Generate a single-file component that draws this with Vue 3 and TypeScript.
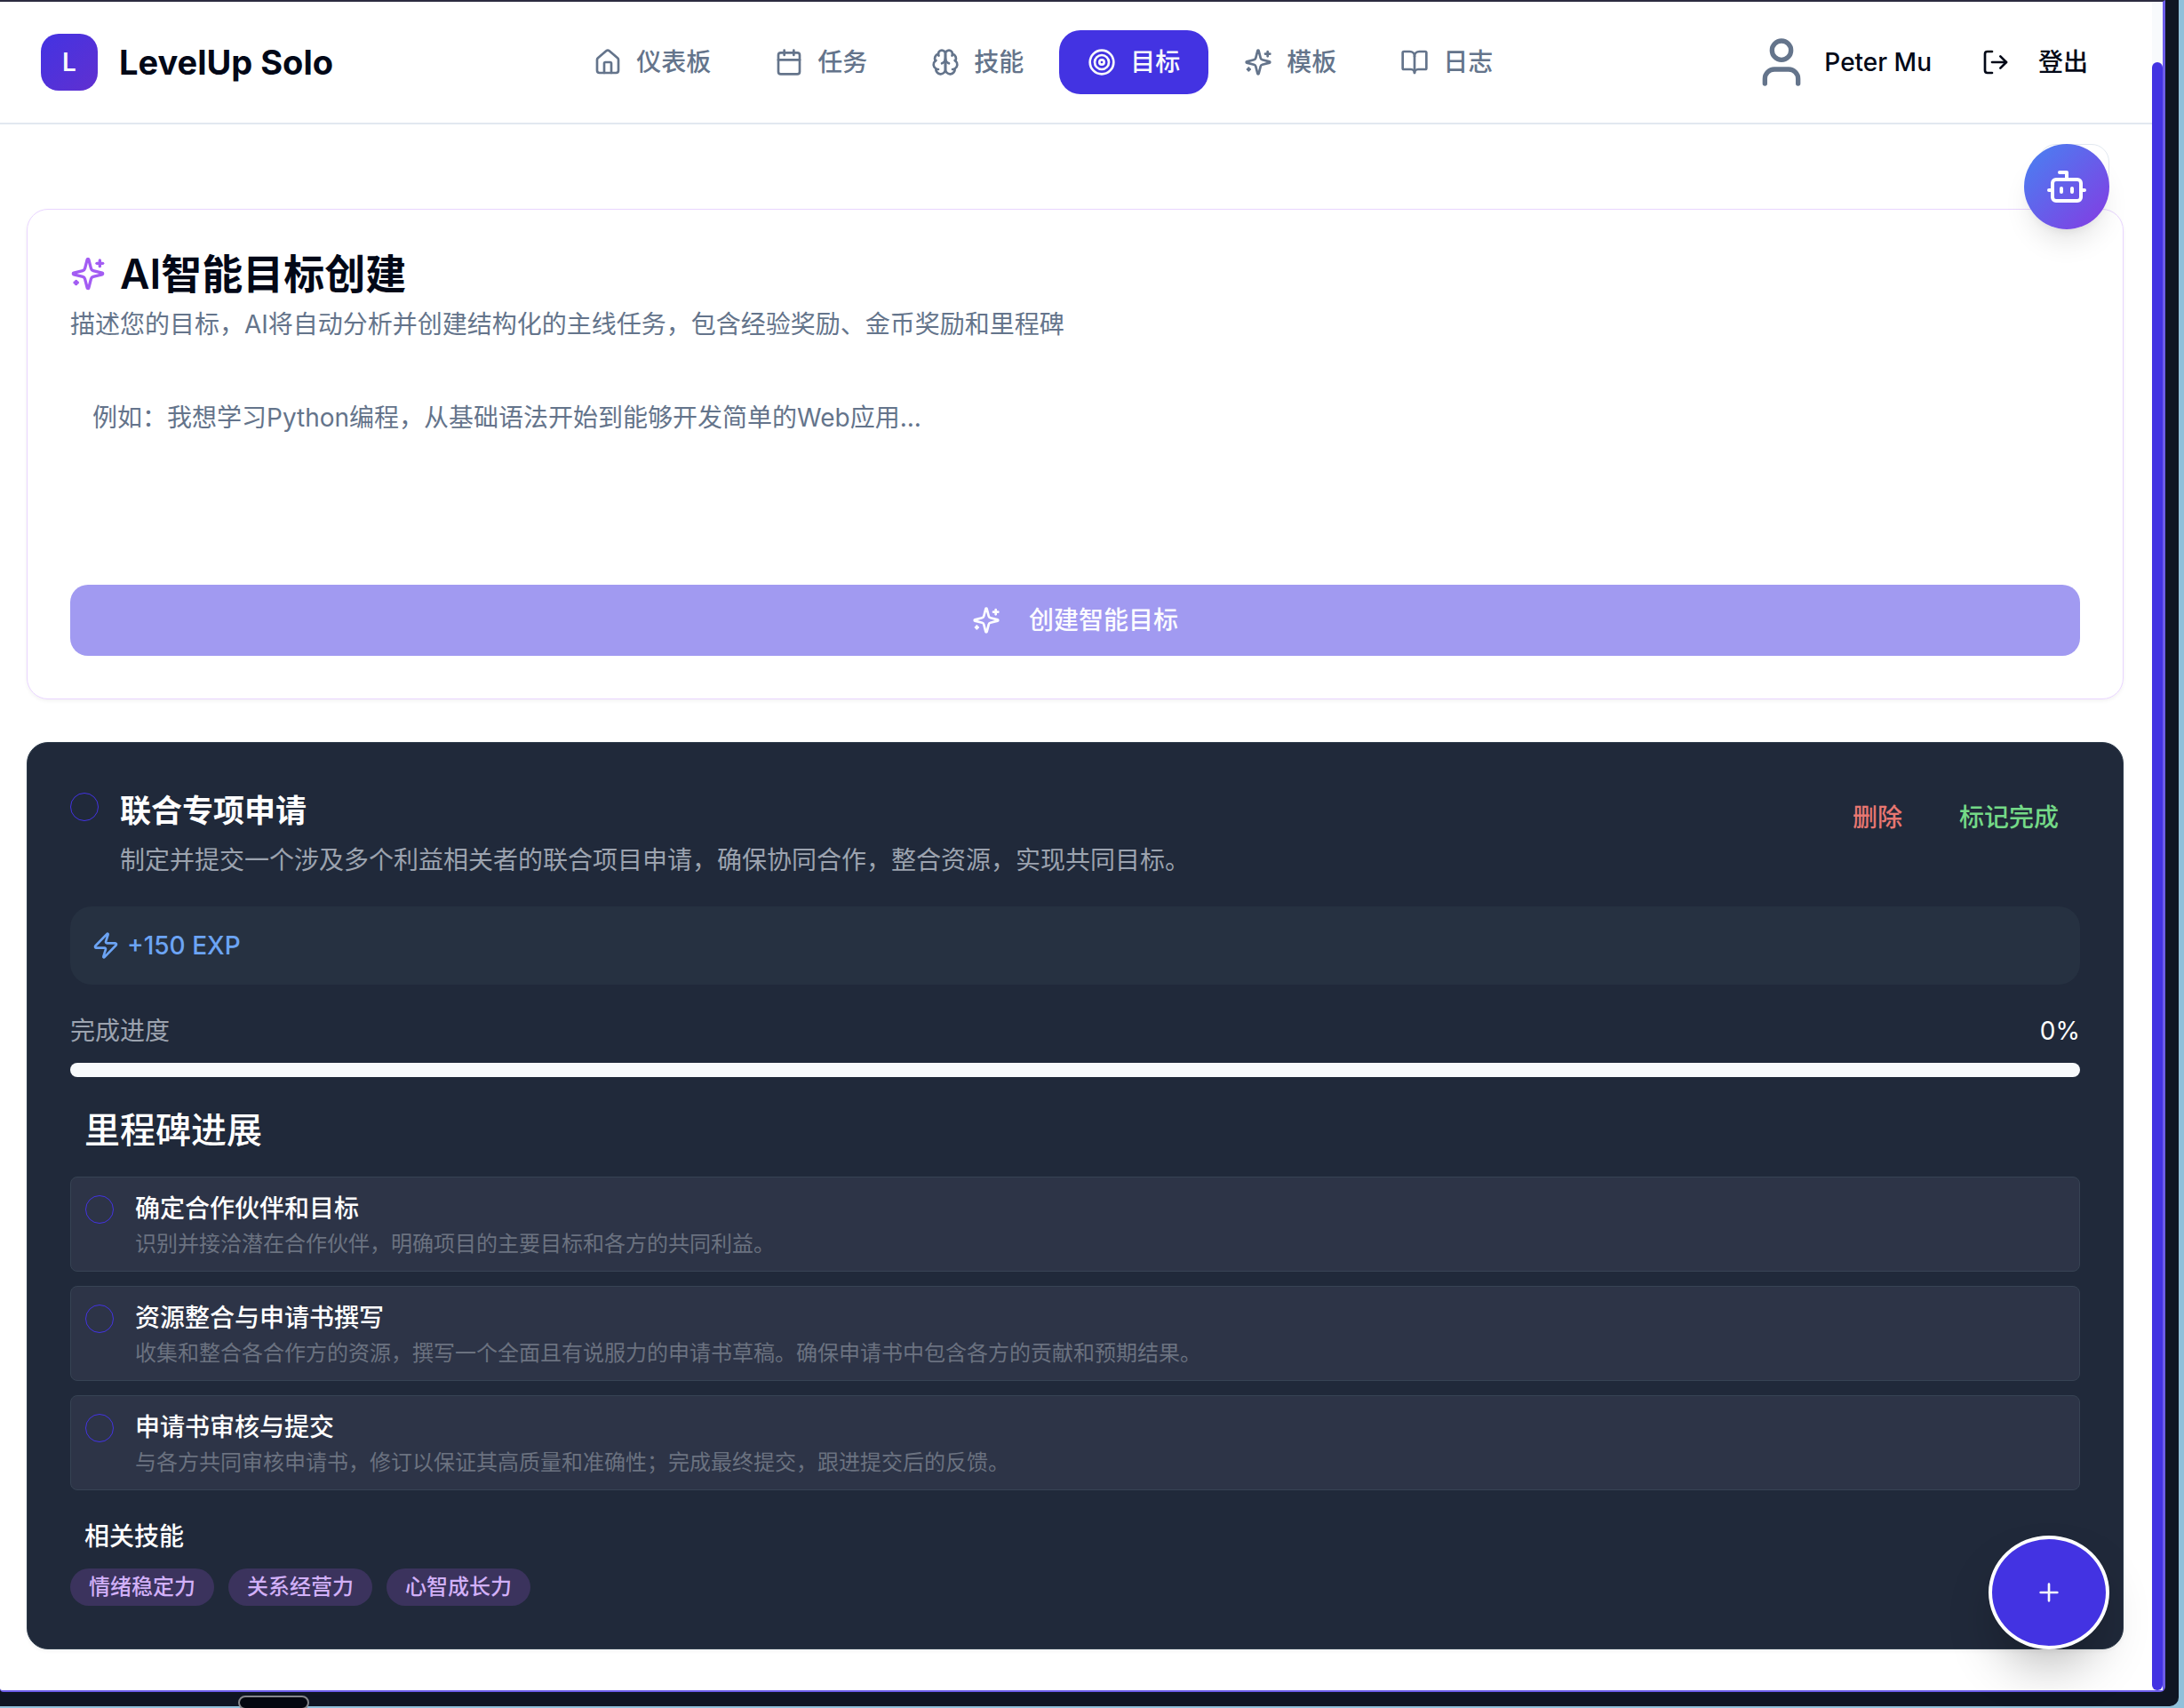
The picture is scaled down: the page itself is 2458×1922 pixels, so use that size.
<script setup lang="ts">
import { ref } from 'vue'

interface NavItem {
  label: string
  active?: boolean
  paths: string[]
}

interface Milestone {
  id: string
  title: string
  description: string
}

const circle = (r: number): string => `M${12 - r} 12a${r} ${r} 0 1 0 ${r * 2} 0a${r} ${r} 0 1 0 ${-r * 2} 0z`

const sparkles: string[] = [
  'M9.937 15.5A2 2 0 0 0 8.5 14.063l-6.135-1.582a.5.5 0 0 1 0-.962L8.5 9.936A2 2 0 0 0 9.937 8.5l1.582-6.135a.5.5 0 0 1 .963 0L14.063 8.5A2 2 0 0 0 15.5 9.937l6.135 1.581a.5.5 0 0 1 0 .964L15.5 14.063a2 2 0 0 0-1.437 1.437l-1.582 6.135a.5.5 0 0 1-.963 0z',
  'M20 3v4',
  'M22 5h-4',
  'M4 17v2',
  'M5 18H3',
]

const nav: NavItem[] = [
  {
    label: '仪表板',
    paths: [
      'M15 21v-8a1 1 0 0 0-1-1h-4a1 1 0 0 0-1 1v8',
      'M3 10a2 2 0 0 1 .709-1.528l7-5.999a2 2 0 0 1 2.582 0l7 5.999A2 2 0 0 1 21 10v9a2 2 0 0 1-2 2H5a2 2 0 0 1-2-2z',
    ],
  },
  {
    label: '任务',
    paths: ['M8 2v4', 'M16 2v4', 'M5 4h14a2 2 0 0 1 2 2v14a2 2 0 0 1-2 2H5a2 2 0 0 1-2-2V6a2 2 0 0 1 2-2z', 'M3 10h18'],
  },
  {
    label: '技能',
    paths: [
      'M12 5a3 3 0 1 0-5.997.125 4 4 0 0 0-2.526 5.77 4 4 0 0 0 .556 6.588A4 4 0 1 0 12 18Z',
      'M12 5a3 3 0 1 1 5.997.125 4 4 0 0 1 2.526 5.77 4 4 0 0 1-.556 6.588A4 4 0 1 1 12 18Z',
      'M15 13a4.5 4.5 0 0 1-3-4 4.5 4.5 0 0 1-3 4',
      'M17.599 6.5a3 3 0 0 0 .399-1.375',
      'M6.003 5.125A3 3 0 0 0 6.401 6.5',
      'M3.477 10.896a4 4 0 0 1 .585-.396',
      'M19.938 10.5a4 4 0 0 1 .585.396',
      'M6 18a4 4 0 0 1-1.967-.516',
      'M19.967 17.484A4 4 0 0 1 18 18',
    ],
  },
  { label: '目标', active: true, paths: [circle(10), circle(6), circle(2)] },
  { label: '模板', paths: sparkles },
  {
    label: '日志',
    paths: [
      'M12 7v14',
      'M3 18a1 1 0 0 1-1-1V4a1 1 0 0 1 1-1h5a4 4 0 0 1 4 4 4 4 0 0 1 4-4h5a1 1 0 0 1 1 1v13a1 1 0 0 1-1 1h-6a3 3 0 0 0-3 3 3 3 0 0 0-3-3z',
    ],
  },
]

const milestones: Milestone[] = [
  { id: 'm1', title: '确定合作伙伴和目标', description: '识别并接洽潜在合作伙伴，明确项目的主要目标和各方的共同利益。' },
  { id: 'm2', title: '资源整合与申请书撰写', description: '收集和整合各合作方的资源，撰写一个全面且有说服力的申请书草稿。确保申请书中包含各方的贡献和预期结果。' },
  { id: 'm3', title: '申请书审核与提交', description: '与各方共同审核申请书，修订以保证其高质量和准确性；完成最终提交，跟进提交后的反馈。' },
]

const skills: string[] = ['情绪稳定力', '关系经营力', '心智成长力']

const goalText = ref<string>('')
const progress = ref<number>(0)
const done = ref<string[]>([])
</script>

<template>
  <div class="desktop">
    <div class="window">
      <div class="viewport">
        <div class="page">
          <header class="header">
            <div class="brand">
              <span class="logo">L</span>
              <span class="brand-name">LevelUp Solo</span>
            </div>
            <nav class="nav">
              <a v-for="item in nav" :key="item.label" href="#" class="nav-item" :class="{ active: item.active }">
                <svg class="icon" viewBox="0 0 24 24" aria-hidden="true">
                  <path v-for="d in item.paths" :key="d" :d="d" />
                </svg>
                {{ item.label }}
              </a>
            </nav>
            <div class="account">
              <div class="user">
                <svg class="icon avatar" viewBox="0 0 24 24" aria-hidden="true">
                  <path d="M19 21v-2a4 4 0 0 0-4-4H9a4 4 0 0 0-4 4v2" />
                  <circle cx="12" cy="7" r="4" />
                </svg>
                <span>Peter Mu</span>
              </div>
              <button type="button" class="logout">
                <svg class="icon" viewBox="0 0 24 24" aria-hidden="true">
                  <path d="M9 21H5a2 2 0 0 1-2-2V5a2 2 0 0 1 2-2h4" />
                  <path d="m16 17 5-5-5-5" />
                  <path d="M21 12H9" />
                </svg>
                登出
              </button>
            </div>
          </header>

          <main class="main">
            <section class="card create">
              <h2 class="create-title">
                <svg class="icon create-icon" viewBox="0 0 24 24" aria-hidden="true">
                  <path v-for="d in sparkles" :key="d" :d="d" />
                </svg>
                AI智能目标创建
              </h2>
              <p class="create-desc">描述您的目标，AI将自动分析并创建结构化的主线任务，包含经验奖励、金币奖励和里程碑</p>
              <textarea
                v-model="goalText"
                class="goal-input"
                aria-label="AI智能目标创建"
                placeholder="例如：我想学习Python编程，从基础语法开始到能够开发简单的Web应用..."
              ></textarea>
              <button type="button" class="create-button" :disabled="!goalText">
                <svg class="icon" viewBox="0 0 24 24" aria-hidden="true">
                  <path v-for="d in sparkles" :key="d" :d="d" />
                </svg>
                创建智能目标
              </button>
            </section>

            <section class="card goal">
              <div class="goal-head">
                <input id="goal" v-model="done" type="checkbox" value="goal" class="check" />
                <div class="goal-text">
                  <label for="goal" class="goal-title">联合专项申请</label>
                  <p class="goal-desc">制定并提交一个涉及多个利益相关者的联合项目申请，确保协同合作，整合资源，实现共同目标。</p>
                </div>
                <div class="actions">
                  <button type="button" class="action remove">删除</button>
                  <button type="button" class="action complete">标记完成</button>
                </div>
              </div>

              <div class="reward">
                <svg class="icon" viewBox="0 0 24 24" aria-hidden="true">
                  <path d="M4 14a1 1 0 0 1-.78-1.63l9.9-10.2a.5.5 0 0 1 .86.46l-1.92 6.02A1 1 0 0 0 13 10h7a1 1 0 0 1 .78 1.63l-9.9 10.2a.5.5 0 0 1-.86-.46l1.92-6.02A1 1 0 0 0 11 14z" />
                </svg>
                +150 EXP
              </div>

              <div class="progress">
                <div class="progress-row">
                  <span id="progress-label" class="progress-label">完成进度</span>
                  <span>{{ progress }}%</span>
                </div>
                <div class="track" role="progressbar" aria-labelledby="progress-label" :aria-valuenow="progress">
                  <div class="fill" :style="{ width: progress + '%' }"></div>
                </div>
              </div>

              <div class="milestones">
                <h3 class="milestones-title">里程碑进展</h3>
                <ul class="milestone-list">
                  <li v-for="m in milestones" :key="m.id" class="milestone">
                    <input :id="m.id" v-model="done" type="checkbox" :value="m.id" class="check" />
                    <div>
                      <label :for="m.id" class="milestone-title">{{ m.title }}</label>
                      <p class="milestone-desc">{{ m.description }}</p>
                    </div>
                  </li>
                </ul>
              </div>

              <div class="skills">
                <h4 class="skills-title">相关技能</h4>
                <ul class="tags">
                  <li v-for="s in skills" :key="s" class="tag">{{ s }}</li>
                </ul>
              </div>
            </section>
          </main>

          <div class="assistant">
            <div class="assistant-panel"></div>
            <button type="button" class="bot" aria-label="AI">
              <svg class="icon bot-icon" viewBox="0 0 24 24" aria-hidden="true">
                <path d="M12 8V4H8" />
                <rect x="4" y="8" width="16" height="12" rx="2" />
                <path d="M2 14h2M20 14h2M15 13v2M9 13v2" />
              </svg>
            </button>
          </div>
          <button type="button" class="fab" aria-label="+">
            <svg class="icon" viewBox="0 0 24 24" aria-hidden="true">
              <path d="M5 12h14M12 5v14" />
            </svg>
          </button>
        </div>
        <div class="scrollbar"><div class="thumb"></div></div>
      </div>
      <div class="dock-handle"></div>
    </div>
  </div>
</template>

<style>
body {
  margin: 0;
}
</style>

<style scoped>
* {
  box-sizing: border-box;
}

.desktop {
  min-height: 100vh;
  display: flex;
  padding: 0 6px 2px 0;
  background: #90c0da;
  overflow: hidden;
  font-family: Inter, 'Noto Sans CJK SC', sans-serif;
  font-size: 28px;
  line-height: 40px;
  color: #020817;
}

.window {
  position: relative;
  flex: 1;
  min-width: 0;
  display: flex;
  padding: 0 15px 16px 0;
  background: #0f1523;
  border-bottom-right-radius: 10px;
}

.viewport {
  flex: 1;
  min-width: 0;
  display: flex;
  background: #fff;
  border-top: 2px solid #2c2b40;
  border-right: 3px solid #6c5ce9;
  border-bottom: 2px solid #6c5ce9;
  border-bottom-right-radius: 6px;
  border-bottom-left-radius: 4px;
}

.page {
  position: relative;
  flex: 1;
  min-width: 0;
}

.scrollbar {
  width: 12px;
  display: flex;
  padding-top: 68px;
  background: #f8fafc;
}

.thumb {
  flex: 1;
  border-radius: 6px;
  background: #4333e2;
}

.dock-handle {
  position: absolute;
  left: 268px;
  bottom: -4px;
  width: 80px;
  height: 16px;
  border: 2px solid #85868a;
  border-radius: 8px;
  background: #04070f;
}

.icon {
  width: 32px;
  height: 32px;
  flex: none;
  fill: none;
  stroke: currentColor;
  stroke-width: 2;
  stroke-linecap: round;
  stroke-linejoin: round;
}

button {
  margin: 0;
  border: 0;
  background: none;
  font: inherit;
  font-weight: 500;
  color: inherit;
  cursor: pointer;
}

h2,
h3,
h4,
p,
ul {
  margin: 0;
  padding: 0;
  list-style: none;
}

label {
  display: block;
}

.header {
  display: flex;
  align-items: center;
  justify-content: space-between;
  padding: 32px 48px 32px 46px;
  border-bottom: 2px solid #e2e8f0;
}

.brand,
.nav,
.account,
.user {
  display: flex;
  align-items: center;
}

.brand {
  gap: 24px;
}

.logo {
  width: 64px;
  height: 64px;
  display: flex;
  align-items: center;
  justify-content: center;
  border-radius: 20px;
  background: linear-gradient(135deg, #4333e2, #6030d0);
  color: #f8fafc;
  font-weight: 600;
}

.brand-name {
  font-size: 38px;
  font-weight: 700;
}

.nav {
  gap: 8px;
}

.nav-item {
  display: flex;
  align-items: center;
  gap: 16px;
  padding: 16px 32px;
  border-radius: 24px;
  color: #64748b;
  font-weight: 500;
  text-decoration: none;
}

.nav-item.active {
  background: #4333e2;
  color: #f8fafc;
}

.account {
  gap: 32px;
}

.user {
  gap: 16px;
  font-weight: 500;
}

.avatar {
  width: 64px;
  height: 64px;
  color: #64748b;
}

.logout {
  display: flex;
  align-items: center;
  gap: 32px;
  padding: 16px 24px;
}

.main {
  display: flex;
  flex-direction: column;
  gap: 48px;
  padding: 95px 32px 46px 30px;
}

.card {
  display: flex;
  flex-direction: column;
  padding: 48px;
  border: 1px solid #e9d5ff;
  border-radius: 24px;
  box-shadow: 0 2px 4px rgba(0, 0, 0, 0.05);
}

.create-title {
  display: flex;
  align-items: center;
  gap: 16px;
  font-size: 46px;
  line-height: 48px;
  font-weight: 600;
}

.create-icon {
  width: 40px;
  height: 40px;
  color: #a35cf3;
}

.create-desc {
  margin-top: 13px;
  color: #64748b;
}

.goal-input {
  height: 194px;
  margin: 47px 0 32px;
  padding: 18px 25px;
  border: 0;
  background: transparent;
  font: inherit;
  color: inherit;
  resize: none;
}

.goal-input::placeholder {
  color: #64748b;
  opacity: 1;
}

.create-button {
  display: flex;
  align-items: center;
  justify-content: center;
  gap: 32px;
  padding: 20px;
  border-radius: 20px;
  background: #a19af1;
  color: #fcfcff;
}

.goal {
  gap: 32px;
  border-color: #2d3b4b;
  background: #20293a;
  color: #fff;
}

.goal-head {
  display: flex;
  align-items: flex-start;
}

.check {
  appearance: none;
  flex: none;
  width: 32px;
  height: 32px;
  margin: 8px 24px 0 0;
  border: 1px solid #4333e2;
  border-radius: 50%;
}

.check:checked {
  background: #4333e2;
}

.goal-text {
  flex: 1;
  min-width: 0;
}

.goal-title {
  font-size: 35px;
  line-height: 56px;
  font-weight: 600;
}

.goal-desc {
  margin-top: 8px;
  color: #9ca3af;
}

.actions {
  display: flex;
  gap: 16px;
}

.action {
  padding: 16px 24px;
}

.remove {
  color: #e87771;
}

.complete {
  color: #74d987;
}

.reward {
  display: flex;
  align-items: center;
  gap: 8px;
  padding: 24px;
  border-radius: 24px;
  background: #263141;
  color: #6ca4f4;
  font-weight: 500;
}

.progress-row {
  display: flex;
  justify-content: space-between;
}

.progress-label {
  color: #9ca3af;
}

.track {
  height: 16px;
  margin-top: 16px;
  border-radius: 8px;
  background: #f8fafc;
  overflow: hidden;
}

.fill {
  height: 100%;
  background: #4333e2;
}

.milestones-title {
  padding-left: 16px;
  font-size: 40px;
  line-height: 56px;
  font-weight: 500;
}

.milestone-list {
  display: flex;
  flex-direction: column;
  gap: 16px;
  margin-top: 24px;
}

.milestone {
  display: flex;
  align-items: flex-start;
  padding: 15px 16px 12px;
  border: 1px solid #374354;
  border-radius: 8px;
  background: #2d3447;
}

.milestone .check {
  margin-top: 5px;
}

.milestone-title {
  font-weight: 500;
}

.milestone-desc {
  margin-top: 2px;
  font-size: 24px;
  line-height: 36px;
  color: #6b7280;
}

.skills-title {
  padding-left: 16px;
  font-size: 28px;
  font-weight: 500;
}

.tags {
  display: flex;
  gap: 16px;
  margin-top: 16px;
}

.tag {
  padding: 5px 21px;
  border-radius: 21px;
  background: #3b335d;
  color: #d2b0f8;
  font-size: 24px;
  line-height: 32px;
  font-weight: 500;
}

/* Floating controls over the page */
.assistant {
  position: absolute;
  top: 160px;
  right: 48px;
}

.assistant-panel {
  position: absolute;
  top: 0;
  right: 0;
  width: 80px;
  height: 56px;
  border: 1px solid #e2e8f0;
  border-radius: 20px;
}

.bot {
  position: relative;
  width: 96px;
  height: 96px;
  display: flex;
  align-items: center;
  justify-content: center;
  border-radius: 50%;
  background: linear-gradient(135deg, #4783f2, #853ae2);
  box-shadow: 0 20px 30px -6px rgba(0, 0, 0, 0.1), 0 8px 12px -8px rgba(0, 0, 0, 0.1);
  color: #fff;
}

.bot-icon {
  width: 48px;
  height: 48px;
}

.fab {
  position: absolute;
  right: 48px;
  bottom: 46px;
  width: 136px;
  height: 128px;
  display: flex;
  align-items: center;
  justify-content: center;
  border: 4px solid #fff;
  border-radius: 50%;
  background: #4333e2;
  box-shadow: 0 30px 60px -14px rgba(0, 0, 0, 0.3);
  color: #f8fafc;
}
</style>
